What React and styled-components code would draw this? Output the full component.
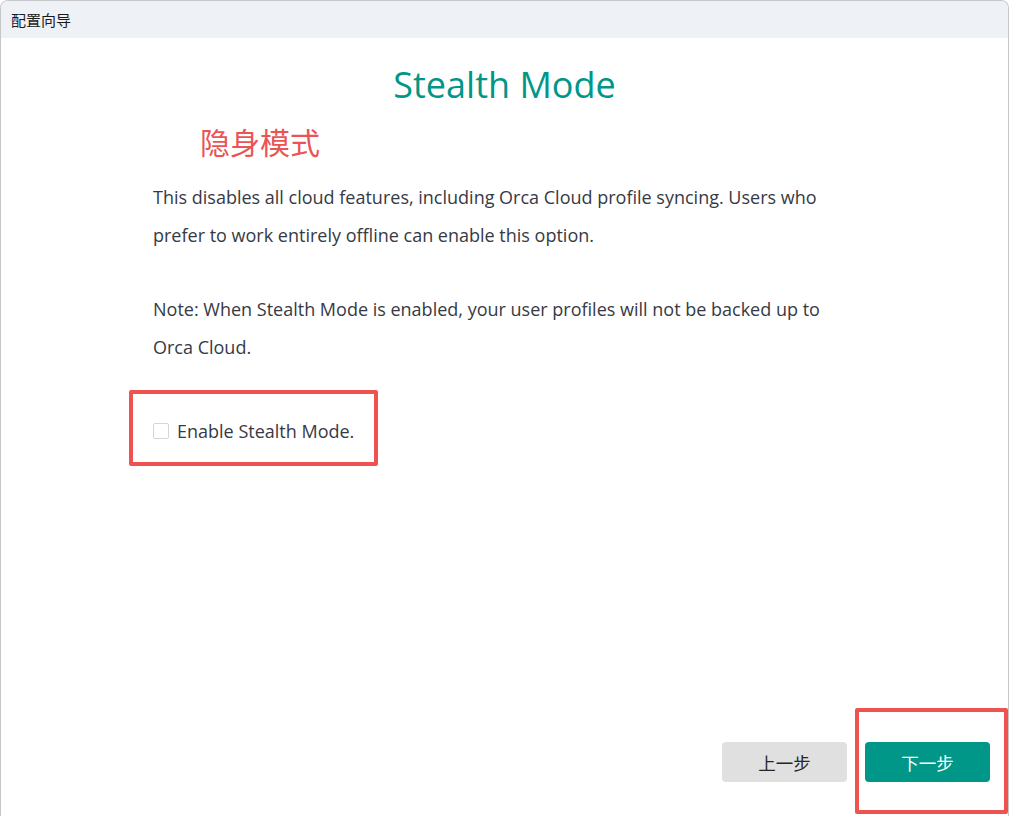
import React from "react";
import styled, { createGlobalStyle } from "styled-components";

const Global = createGlobalStyle`
  html, body { margin: 0; padding: 0; background: #ffffff; }
  body { font-family: "Open Sans", "Noto Sans CJK SC", sans-serif; }
  * { box-sizing: border-box; }
`;

const Window = styled.div`
  position: relative;
  width: 1009px;
  height: 816px;
  display: flex;
  flex-direction: column;
  background: #ffffff;
  border: 1px solid #c4c6ca;
  border-bottom: none;
  border-radius: 8px 8px 0 0;
  overflow: hidden;
`;

const TitleBar = styled.div`
  height: 37px;
  flex: none;
  display: flex;
  align-items: center;
  padding-left: 10px;
  background: #eef1f6;
  font-family: "Noto Sans CJK SC", sans-serif;
  font-size: 15px;
  color: #1a1a1a;
`;

const Body = styled.div`
  flex: 1;
  display: flex;
  flex-direction: column;
  padding: 24px 0 0 152px;
`;

const Heading = styled.h1`
  margin: 0 0 0 -152px;
  text-align: center;
  font-family: "Open Sans", sans-serif;
  font-weight: 400;
  font-size: 36px;
  line-height: 46px;
  color: #009688;
`;

const Note = styled.div`
  margin: 15px 0 0 47px;
  font-family: "Noto Sans CJK SC", sans-serif;
  font-size: 30px;
  line-height: 36px;
  color: #ea5455;
`;

const Paragraph = styled.p`
  margin: ${(p) => p.$top}px 0 0;
  width: 690px;
  font-family: "Open Sans", sans-serif;
  font-size: 18px;
  line-height: 38px;
  color: #363a45;
`;

const CheckRow = styled.label`
  margin-top: 46px;
  display: flex;
  align-items: center;
  gap: 8px;
  height: 38px;
  font-family: "Open Sans", sans-serif;
  font-size: 18px;
  color: #363a45;
`;

const Box = styled.span`
  width: 16px;
  height: 16px;
  border: 1px solid #d6d6d6;
  border-radius: 2px;
  background: #ffffff;
`;

const Footer = styled.div`
  margin-top: auto;
  display: flex;
  justify-content: flex-end;
  gap: 18px;
  padding: 0 18px 34px 0;
`;

const Button = styled.button`
  width: 125px;
  height: 40px;
  border: none;
  border-radius: 4px;
  font-family: "Noto Sans CJK SC", sans-serif;
  font-size: 17.5px;
  background: ${(p) => (p.$primary ? "#009688" : "#e0e0e0")};
  color: ${(p) => (p.$primary ? "#ffffff" : "#262626")};
`;

const Mark = styled.div`
  position: absolute;
  left: ${(p) => p.$x}px;
  top: ${(p) => p.$y}px;
  width: ${(p) => p.$w}px;
  height: ${(p) => p.$h}px;
  border: 4px solid #ef5350;
  border-radius: 2px;
  pointer-events: none;
`;

export default function App() {
  return (
    <>
      <Global />
      <Window>
        <TitleBar>配置向导</TitleBar>
        <Body>
          <Heading>Stealth Mode</Heading>
          <Note>隐身模式</Note>
          <Paragraph $top={19}>
            This disables all cloud features, including Orca Cloud profile syncing. Users who
            prefer to work entirely offline can enable this option.
          </Paragraph>
          <Paragraph $top={36}>
            Note: When Stealth Mode is enabled, your user profiles will not be backed up to
            Orca Cloud.
          </Paragraph>
          <CheckRow>
            <Box />
            Enable Stealth Mode.
          </CheckRow>
        </Body>
        <Footer>
          <Button>上一步</Button>
          <Button $primary>下一步</Button>
        </Footer>
        <Mark $x={128} $y={389} $w={249} $h={76} />
        <Mark $x={854} $y={707} $w={153} $h={106} />
      </Window>
    </>
  );
}
